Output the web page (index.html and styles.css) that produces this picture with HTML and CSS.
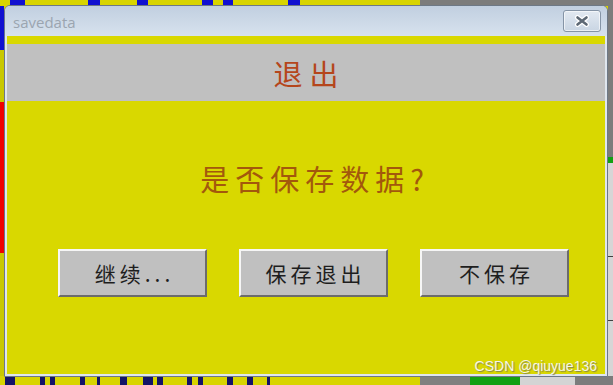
FILE: index.html
```html
<!DOCTYPE html>
<html lang="zh-CN">
<head>
<meta charset="utf-8">
<title>savedata</title>
<link rel="stylesheet" href="styles.css">
</head>
<body>
<div class="desktop">
  <div class="window">
    <div class="titlebar">
      <span class="title">savedata</span>
      <button class="close" aria-label="close">
        <svg width="16" height="12" viewBox="0 0 16 12">
          <path d="M3.5 2.5 L12.5 9.5 M12.5 2.5 L3.5 9.5" stroke="#ffffff" stroke-width="5" stroke-linecap="round"/>
          <path d="M3.5 2.5 L12.5 9.5 M12.5 2.5 L3.5 9.5" stroke="#5d6874" stroke-width="2.6" stroke-linecap="round"/>
        </svg>
      </button>
    </div>
    <div class="client">
      <div class="band">退出</div>
      <div class="message">是否保存数据?</div>
      <div class="buttons">
        <button class="btn">继续...</button>
        <button class="btn">保存退出</button>
        <button class="btn">不保存</button>
      </div>
      <div class="watermark">CSDN @qiuyue136</div>
    </div>
  </div>
</div>
</body>
</html>
```

FILE: styles.css
```css
* { box-sizing: border-box; }
html, body { margin: 0; padding: 0; }
body { width: 613px; height: 385px; overflow: hidden; background: #808080; }

.desktop {
  position: relative;
  width: 613px;
  height: 385px;
  overflow: hidden;
  background-color: #d8d400;
  background-image:
    /* top strip */
    linear-gradient(to right,
      #d8d400 0 10px, #1010d0 10px 25px, #d8d400 25px 88px, #1010d0 88px 100px,
      #d8d400 100px 137px, #1010d0 137px 148px, #d8d400 148px 202px, #1010d0 202px 213px,
      #d8d400 213px 223px, #1010d0 223px 233px, #d8d400 233px 288px, #1010d0 288px 300px,
      #d8d400 300px 420px, #7c7c7c 420px 613px),
    /* bottom strip */
    linear-gradient(to right,
      #d8d400 0 5px, #141466 5px 15px, #d8d400 15px 40px, #141466 40px 45px, #d8d400 45px 50px,
      #141466 50px 55px, #d8d400 55px 80px, #141466 80px 85px, #d8d400 85px 97px, #141466 97px 100px,
      #d8d400 100px 120px, #141466 120px 127px, #d8d400 127px 143px, #141466 143px 153px,
      #d8d400 153px 157px, #141466 157px 163px, #d8d400 163px 187px, #141466 187px 192px,
      #d8d400 192px 198px, #141466 198px 203px, #d8d400 203px 227px, #141466 227px 233px,
      #d8d400 233px 247px, #141466 247px 253px, #d8d400 253px 267px, #141466 267px 270px,
      #d8d400 270px 420px, #808080 420px 470px, #13a013 470px 520px, #d4d4d4 520px 575px, #7c7c7c 575px 613px),
    /* left strip */
    linear-gradient(to bottom,
      #1010d0 0 50px, #c8c800 50px 102px, #f00000 102px 253px, #c8c800 253px 385px),
    /* right strip */
    linear-gradient(to bottom,
      #7c7c7c 0 157px, #13a013 157px 163px, #d6d6d6 163px 256px, #404040 256px 257px,
      #d6d6d6 257px 320px, #404040 320px 321px, #d6d6d6 321px 385px);
  background-size: 613px 6px, 613px 9px, 4px 385px, 5px 385px;
  background-position: 0 0, 0 376px, 0 0, 608px 0;
  background-repeat: no-repeat;
}

.window {
  position: absolute;
  left: 4px;
  top: 5px;
  width: 604px;
  height: 372px;
  border: 1px solid #6d7886;
  border-radius: 6px 6px 0 0;
  background: #dfe6ee;
  padding: 0 2px 2px 2px;
  display: flex;
  flex-direction: column;
}

.titlebar {
  height: 30px;
  flex: 0 0 30px;
  margin: 0 -2px;
  border-radius: 5px 5px 0 0;
  background: linear-gradient(to bottom, #c1cfe0, #d7e2ee);
  display: flex;
  align-items: flex-start;
  justify-content: space-between;
  padding: 0 6px 0 8px;
}

.title {
  font-family: "Open Sans", "DejaVu Sans", sans-serif;
  font-size: 15px;
  color: #9ba5b0;
  line-height: 16px;
  margin-top: 8px;
}

.close {
  margin-top: 4px;
  width: 38px;
  height: 22px;
  padding: 0;
  border: 1px solid #8594a6;
  border-radius: 3px;
  background: linear-gradient(to bottom, #e2e9f1, #c9d5e3);
  display: flex;
  align-items: center;
  justify-content: center;
  box-shadow: inset 0 0 0 1px rgba(255,255,255,0.6);
}

.client {
  position: relative;
  flex: 1;
  background: #d9d800;
  padding-top: 8px;
  display: flex;
  flex-direction: column;
}

.band {
  height: 57px;
  background: #c0c0c0;
  display: flex;
  align-items: center;
  justify-content: center;
  font-family: "Noto Sans CJK SC", sans-serif;
  font-weight: 400;
  font-size: 29px;
  letter-spacing: 7px;
  padding-left: 7px;
  color: #b5461c;
}

.message {
  margin-top: 60px;
  height: 34px;
  line-height: 34px;
  text-align: center;
  font-family: "Noto Sans CJK SC", sans-serif;
  font-size: 29px;
  letter-spacing: 6px;
  padding-left: 18px;
  color: #a3580c;
}

.buttons {
  margin-top: 54px;
  display: flex;
  gap: 32px;
  padding-left: 51px;
}

.btn {
  width: 149px;
  height: 48px;
  background: #c0c0c0;
  border-style: solid;
  border-width: 2px;
  border-color: #f6f6f6 #6c6c6c #6c6c6c #f6f6f6;
  font-family: "Noto Sans CJK SC", sans-serif;
  font-size: 21px;
  letter-spacing: 4px;
  color: #1e1e1e;
  padding: 0 0 0 4px;
  line-height: 1;
}

.watermark {
  position: absolute;
  right: 8px;
  bottom: 0px;
  font-family: "Liberation Sans", Arial, sans-serif;
  font-size: 14px;
  color: #f6f6e6;
  text-shadow: 1px 1px 1px #85854a;
  line-height: 16px;
}
```
